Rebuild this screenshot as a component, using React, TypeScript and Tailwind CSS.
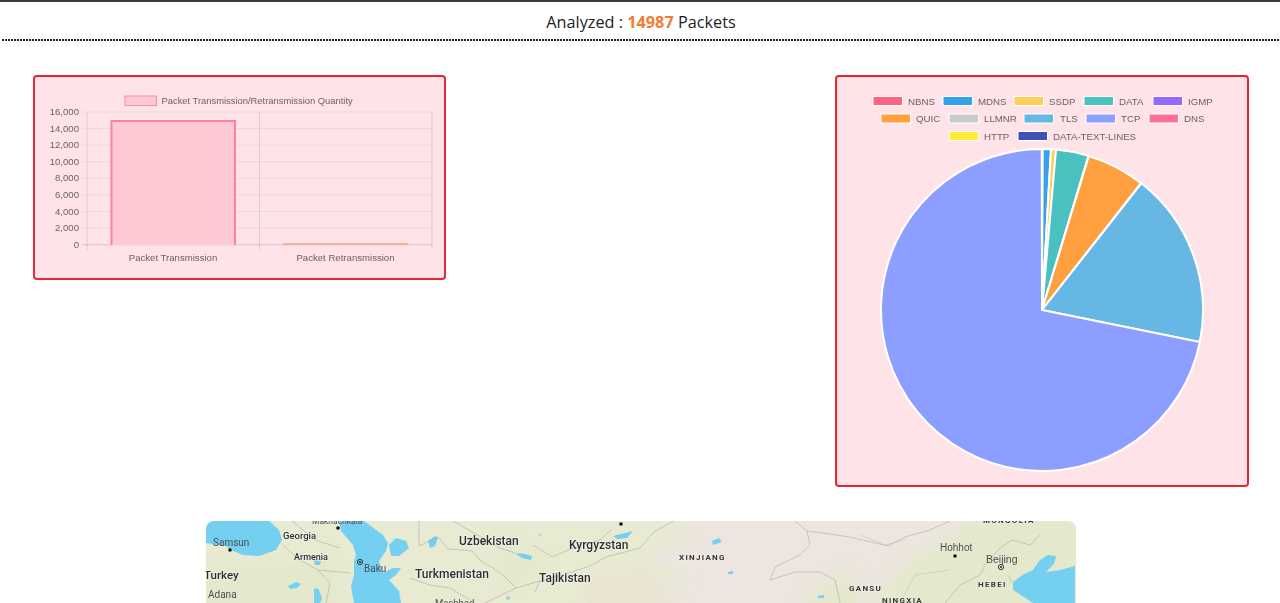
const slices = [
  { from: 0, to: 0.25, color: "#ff6384" },
  { from: 0.25, to: 3.2, color: "#36a2eb" },
  { from: 3.2, to: 5, color: "#ffce56" },
  { from: 5, to: 16.8, color: "#4bc0c0" },
  { from: 16.8, to: 16.9, color: "#9966ff" },
  { from: 16.9, to: 38, color: "#ff9f40" },
  { from: 38, to: 38.1, color: "#c9cbcf" },
  { from: 38.1, to: 101.5, color: "#66b7e3" },
  { from: 101.5, to: 359.9, color: "#8c9eff" },
];

const pieLegend = [
  { label: "NBNS", box: 873, text: 908, y: 101, color: "#ff6384" },
  { label: "MDNS", box: 943, text: 978, y: 101, color: "#36a2eb" },
  { label: "SSDP", box: 1014, text: 1049, y: 101, color: "#ffce56" },
  { label: "DATA", box: 1084, text: 1119, y: 101, color: "#4bc0c0" },
  { label: "IGMP", box: 1153, text: 1188, y: 101, color: "#9966ff" },
  { label: "QUIC", box: 881, text: 916, y: 118.5, color: "#ff9f40" },
  { label: "LLMNR", box: 949, text: 984, y: 118.5, color: "#c9cbcf" },
  { label: "TLS", box: 1024, text: 1060, y: 118.5, color: "#66b7e3" },
  { label: "TCP", box: 1086, text: 1121, y: 118.5, color: "#8c9eff" },
  { label: "DNS", box: 1149, text: 1184, y: 118.5, color: "#ff6f9c" },
  { label: "HTTP", box: 949, text: 984, y: 136, color: "#ffeb3b" },
  { label: "DATA-TEXT-LINES", box: 1018, text: 1053, y: 136, color: "#3f51b5" },
];

const water = [
  "M206 521H269L279 530L282 540L276 550L259 556L243 555L231 550L226 546L206 543Z",
  "M339 521L341 531L353 545L356 555L354 561L354 575L351 586L354 603H401L399 591L389 580L396 575L401 568L393 568L383 573L379 561L386 551L388 543L383 535L364 521Z",
  "M389 545L396 538L406 541L409 548L399 556L391 556Z",
  "M428 541L435 536L438 538L435 546L430 548Z",
  "M515 553L525 554L532 556L531 560L522 558Z",
  "M613 536L633 531L627 538L617 539Z",
  "M314 560L321 561L320 565L315 565Z",
  "M288 586L296 582L301 584L297 588L290 589Z",
  "M314 589L318 588L322 598L320 603H314Z",
  "M712 541L719 538L722 542L713 545Z",
  "M728 572L733 571L733 574L728 574Z",
  "M818 596L824 595L824 598L818 598Z",
  "M1013 582L1024 574L1033 570L1040 560L1048 555L1056 556L1054 564L1046 572L1060 570L1075 566V603H1033L1024 597L1013 590Z",
];

function slicePath(from: number, to: number) {
  const cx = 1042;
  const cy = 310;
  const r = 161;
  const a = ((from - 90) * Math.PI) / 180;
  const b = ((to - 90) * Math.PI) / 180;
  const large = to - from > 180 ? 1 : 0;
  return `M${cx} ${cy}L${cx + r * Math.cos(a)} ${cy + r * Math.sin(a)}A${r} ${r} 0 ${large} 1 ${cx + r * Math.cos(b)} ${cy + r * Math.sin(b)}Z`;
}

function BarChart() {
  const ticks = ["16,000", "14,000", "12,000", "10,000", "8,000", "6,000", "4,000", "2,000", "0"];
  return (
    <svg viewBox="35 77 409 201" className="block w-full h-full blur-[0.3px]" fontFamily="'Liberation Sans', Arial, sans-serif" fontSize="9.6" fill="#6b6166">
      <rect x="125" y="96" width="31.5" height="9.5" fill="#ffc9d4" stroke="#ff8aa3" strokeWidth="1" />
      <text x="161.5" y="103.5" fontSize="9.4">Packet Transmission/Retransmission Quantity</text>
      {ticks.map((t, i) => {
        const y = 112 + i * 16.6;
        return (
          <g key={t}>
            <line x1="82" x2="432" y1={y} y2={y} stroke="#000" strokeOpacity={i === 8 ? 0.14 : 0.06} />
            <text x="79" y={y + 3} textAnchor="end">{t}</text>
          </g>
        );
      })}
      {[87, 259.5, 432].map((x) => (
        <line key={x} x1={x} x2={x} y1="112" y2="250" stroke="#000" strokeOpacity="0.1" />
      ))}
      <path d="M111.5 245V121H235V245" fill="#ffc9d4" stroke="#ff7f9c" strokeWidth="2" />
      <rect x="283" y="243" width="125" height="2" fill="#f5b08f" />
      <text x="173" y="260.5" textAnchor="middle">Packet Transmission</text>
      <text x="345.5" y="260.5" textAnchor="middle">Packet Retransmission</text>
    </svg>
  );
}

function PieChart() {
  return (
    <svg viewBox="837 77 410 408" className="block w-full h-full blur-[0.3px]" fontFamily="'Liberation Sans', Arial, sans-serif" fontSize="9.7" fill="#6b6166">
      {pieLegend.map((l) => (
        <g key={l.label}>
          <rect x={l.box} y={l.y - 4.5} width="29.5" height="9" fill={l.color} stroke="#fff" strokeWidth="1" />
          <text x={l.text} y={l.y + 3.5}>{l.label}</text>
        </g>
      ))}
      {slices.map((s) => (
        <path key={s.color} d={slicePath(s.from, s.to)} fill={s.color} stroke="#fff" strokeWidth="2" strokeLinejoin="round" />
      ))}
    </svg>
  );
}

function MapView() {
  const border = "#a8a6a0";
  return (
    <svg viewBox="206 521 870 82" className="block w-full h-full blur-[0.3px]" fontFamily="Roboto, 'Noto Sans', sans-serif">
      <defs>
        <filter id="soft" x="-20%" y="-20%" width="140%" height="140%">
          <feGaussianBlur stdDeviation="7" />
        </filter>
      </defs>
      <rect x="206" y="521" width="870" height="82" fill="#ece6df" />
      <g filter="url(#soft)">
        <path d="M190 510H640L700 530L640 560L690 575L600 620H190Z" fill="#e8ead2" />
        <path d="M190 560H340V620H190ZM500 530L560 560L500 600ZM860 620L905 565L950 535L990 510H1095V620Z" fill="#e4e9cd" />
        <path d="M810 590L850 570L870 620H800Z" fill="#e5e8ce" />
        <path d="M590 575L650 570L680 620H580Z" fill="#e9e3d2" />
      </g>
      {water.map((d) => (
        <path key={d} d={d} fill="#75cff0" />
      ))}
      <circle cx="540" cy="535" r="1.6" fill="#a6dcec" />
      <circle cx="508" cy="598" r="2" fill="#8fd4ec" />
      <g fill="none" stroke={border} strokeWidth="0.55" strokeLinejoin="round">
        <path d="M419 521V546L438 537L448 549L472 551L480 560L503 575L516 588L540 581L535 592" />
        <path d="M540 581L565 574L590 566L606 557L640 548L655 531L674 521" />
        <path d="M453 521L500 548L515 553M533 545L552 557L568 550L600 540L612 529" />
        <path d="M410 578L430 585L450 588L470 600M485 603L516 588" />
        <path d="M283 545L300 560L318 570L330 583L326 603M292 521L315 540L340 548M318 570L350 573" />
        <path d="M795 521L807 531L830 534L850 537L888 546L905 537L930 530L950 521" />
        <path d="M807 531L810 545L800 555L775 567L770 580L795 572L820 572L835 580L840 603" />
        <path d="M1000 548L985 565L980 575L960 585L945 603M1000 548L1012 540L1030 545L1040 535M1008 575L1012 582" />
        <path d="M860 535L885 545L905 540M900 603L915 575L950 570" strokeOpacity="0.6" />
      </g>
      <circle cx="230" cy="550" r="1.8" fill="#111" />
      <circle cx="338" cy="528" r="1.8" fill="#111" />
      <circle cx="621" cy="524" r="1.8" fill="#111" />
      <circle cx="360" cy="562" r="2.6" fill="none" stroke="#222" strokeWidth="0.9" />
      <circle cx="360" cy="562" r="1" fill="#222" />
      <circle cx="955" cy="556" r="1.8" fill="#111" />
      <circle cx="1001" cy="567" r="2.6" fill="none" stroke="#222" strokeWidth="0.9" />
      <circle cx="1001" cy="567" r="1" fill="#222" />
      <g fontSize="10" fill="#4a4f52">
        <text x="213" y="546">Samsun</text>
        <text x="364" y="572">Baku</text>
        <text x="208" y="598">Adana</text>
        <text x="940" y="551" fontFamily="'Liberation Sans', sans-serif">Hohhot</text>
        <text x="986" y="563" fontSize="10.5" fontFamily="'Liberation Sans', sans-serif">Beijing</text>
        <text x="312" y="524" fontSize="8.5">Makhachkala</text>
        <text x="435" y="606" fontSize="9.5">Mashhad</text>
      </g>
      <g fontWeight="500" fill="#2b2f33" stroke="#fff" strokeOpacity="0.55" strokeWidth="1.2" paintOrder="stroke">
        <text x="283" y="539" fontSize="9.5">Georgia</text>
        <text x="294" y="560" fontSize="9">Armenia</text>
        <text x="459" y="545" fontSize="12">Uzbekistan</text>
        <text x="569" y="549" fontSize="12">Kyrgyzstan</text>
        <text x="415" y="578" fontSize="12">Turkmenistan</text>
        <text x="539" y="582" fontSize="12">Tajikistan</text>
        <text x="204" y="579" fontSize="11.5">Turkey</text>
      </g>
      <g fontSize="8" fontWeight="700" fill="#333" letterSpacing="1.3" stroke="#fff" strokeOpacity="0.5" strokeWidth="1" paintOrder="stroke">
        <text x="679" y="560">XINJIANG</text>
        <text x="849" y="591">GANSU</text>
        <text x="882" y="603">NINGXIA</text>
        <text x="978" y="587">HEBEI</text>
        <text x="983" y="523">MONGOLIA</text>
      </g>
    </svg>
  );
}

export default function App() {
  return (
    <div className="h-[603px] overflow-hidden bg-white border-t-2 border-[#3a3a3a]">
      <div className="ml-[2px] h-[37px] flex items-center justify-center pt-[3px] text-[16.25px] text-[#222] font-['Open_Sans',sans-serif]">
        <span>
          Analyzed : <b className="text-[#f37b33]">14987</b> Packets
        </span>
      </div>
      <div className="ml-[2px] h-[2px] bg-[repeating-linear-gradient(90deg,#222_0,#222_2px,transparent_2px,transparent_3px)]" />
      <div className="flex items-start justify-between pl-[33px] pr-[31px] mt-[34px]">
        <div className="w-[413px] h-[205px] bg-[#fee3e8] border-2 border-[#e62630] rounded">
          <BarChart />
        </div>
        <div className="w-[414px] h-[412px] bg-[#fee3e8] border-2 border-[#e62630] rounded">
          <PieChart />
        </div>
      </div>
      <div className="w-[870px] h-[82px] ml-[206px] mt-[34px] rounded-t-lg overflow-hidden">
        <MapView />
      </div>
    </div>
  );
}
